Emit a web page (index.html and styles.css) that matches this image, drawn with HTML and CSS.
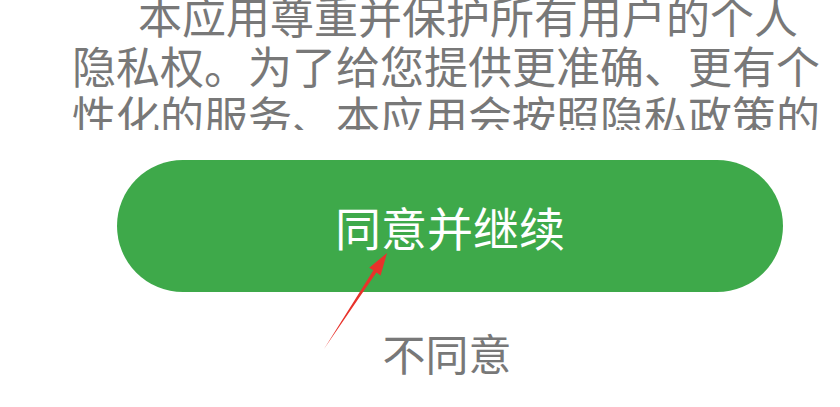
FILE: index.html
```html
<!DOCTYPE html>
<html lang="zh-CN">
<head>
<meta charset="utf-8">
<link rel="stylesheet" href="styles.css">
</head>
<body>
<div class="page">
  <div class="policy">
    <p class="policy-text">本应用尊重并保护所有用户的个人隐私权。为了给您提供更准确、更有个性化的服务、本应用会按照隐私政策的规定使用和披露您的个人信息。</p>
  </div>
  <div class="actions">
    <button class="agree">同意并继续</button>
    <div class="disagree">不同意</div>
  </div>
  <svg class="arrow" width="840" height="407" viewBox="0 0 840 407">
    <polygon points="324,349 376.4,272.6 380.6,275.5 387,253 369.2,267.8 373.4,270.3" fill="#e8322b"/>
  </svg>
</div>
</body>
</html>
```
FILE: styles.css
```css
html, body {
  margin: 0;
  padding: 0;
  background: #ffffff;
}
.page {
  position: relative;
  width: 840px;
  height: 407px;
  overflow: hidden;
  font-family: "Noto Sans CJK SC", "Noto Sans", sans-serif;
}
.policy {
  height: 130px;
  overflow: hidden;
}
.policy-text {
  margin: -10px 0 0 72px;
  width: 752px;
  font-size: 44px;
  line-height: 50px;
  color: #787878;
  text-indent: 66px;
}
.actions {
  display: flex;
  flex-direction: column;
  align-items: center;
  margin: 30px 0 0 117px;
  width: 666px;
}
.agree {
  display: flex;
  align-items: center;
  justify-content: center;
  width: 666px;
  height: 132px;
  border: 0;
  border-radius: 66px;
  background: #3ea94a;
  color: #ffffff;
  font-family: inherit;
  font-size: 46px;
  padding: 0;
}
.disagree {
  margin: 35px 6px 0 0;
  font-size: 43px;
  line-height: 50px;
  color: #787878;
}
.arrow {
  position: absolute;
  left: 0;
  top: 0;
  pointer-events: none;
}
```
